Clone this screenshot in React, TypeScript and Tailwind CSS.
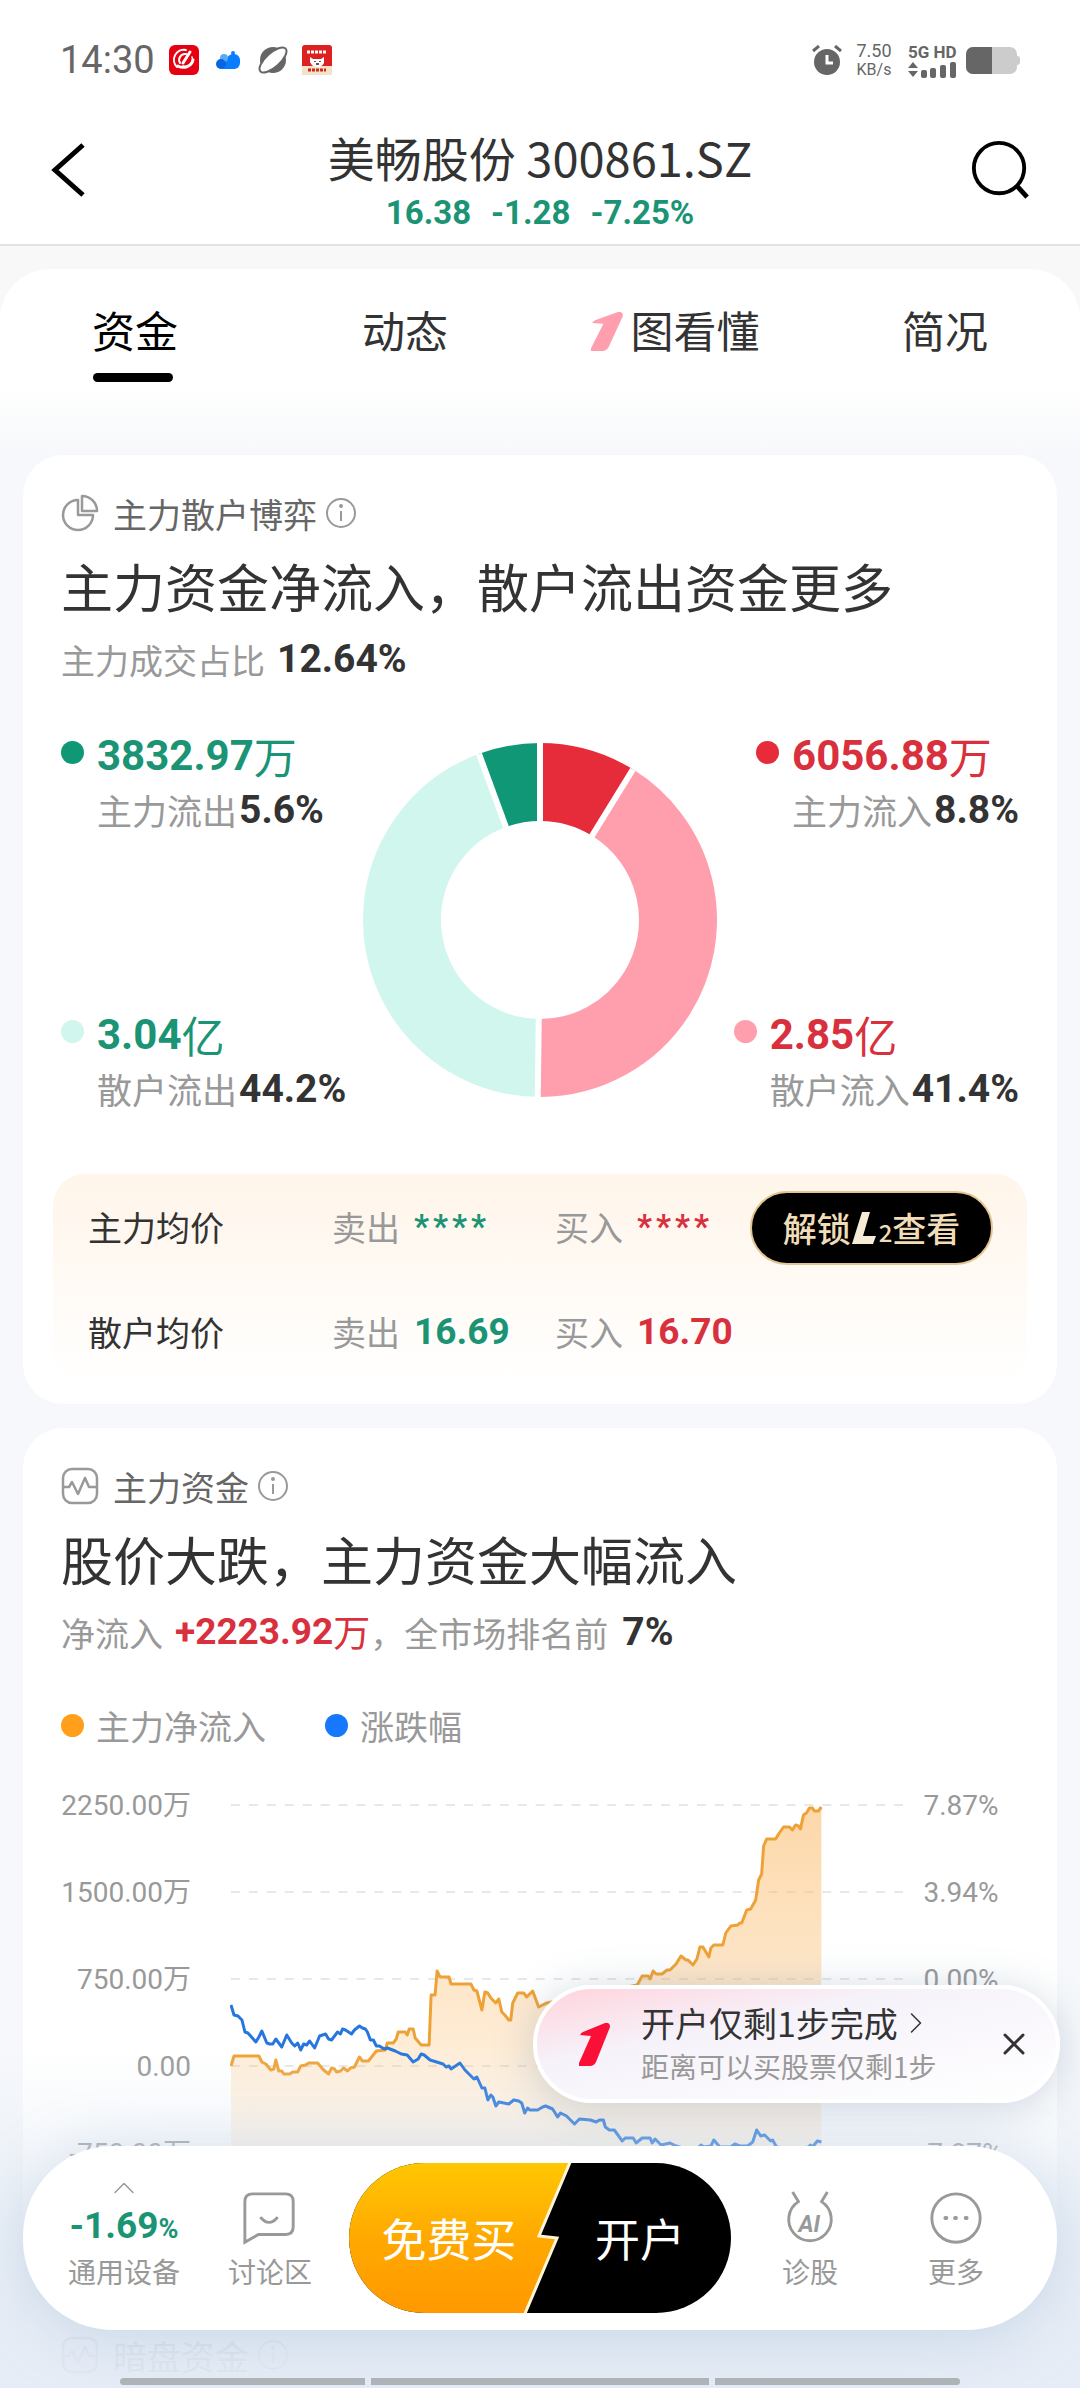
import type { ReactNode } from 'react'
import { ChevronRight, ChevronUp, X } from 'lucide-react'

/**
 * Stock detail page, "资金" tab.
 *
 * The shell is a full-height column: status bar, quote header, tabs, then the
 * cards. The dock and the account-opening tip float over the cards.
 */

const TABS = ['资金', '动态', '图看懂', '简况']

const SLICES = [
  { color: '#e62c3a', share: 8.8 },
  { color: '#ff9fae', share: 41.4 },
  { color: '#d1f6ee', share: 44.2 },
  { color: '#109876', share: 5.6 },
]

const LEFT_AXIS = ['2250.00万', '1500.00万', '750.00万', '0.00', '-750.00万']
// The fourth tick sits under the tip, so it stays blank.
const RIGHT_AXIS = ['7.87%', '3.94%', '0.00%', '', '-7.87%']

const INFLOW =
  '1,271 4,261 29,261 32,267 36,269 41,275 44,274 46,265 49,276 52,276 54,279 60,279 63,277 68,277 71,271 76,270 79,268 88,268 94,275 99,279 102,273 105,274 107,277 111,276 114,273 118,276 121,273 125,272 127,268 130,262 133,266 139,266 147,256 156,255 158,248 164,248 167,244 169,237 176,237 178,240 180,234 184,234 186,243 192,250 200,250 202,200 206,200 208,176 211,182 220,182 222,189 242,189 245,195 248,196 253,215 256,197 259,198 262,203 267,208 270,204 273,217 276,220 280,225 282,225 284,208 287,202 289,198 295,198 298,202 304,196 310,212 318,208 409,190 414,181 420,181 422,184 425,176 428,179 434,179 439,175 442,175 448,169 453,161 458,165 460,165 465,170 469,164 472,152 475,152 481,162 483,153 486,150 495,150 498,138 503,131 510,130 512,128 514,128 519,115 523,114 528,105 531,85 534,79 536,51 539,44 548,44 551,39 556,32 562,32 565,35 568,30 571,31 573,34 576,20 579,18 582,13 585,13 587,16 591,16 594,12'

const CHANGE =
  '1,210 4,220 8,221 12,225 15,237 18,238 26,247 29,242 32,236 37,248 40,249 43,249 46,244 52,252 57,240 62,248 65,251 68,248 71,255 74,249 77,250 80,246 85,253 90,241 96,239 99,244 102,245 108,237 111,239 113,234 116,235 122,239 125,235 130,231 133,233 136,234 138,237 141,245 144,245 147,251 150,251 155,254 158,253 166,256 172,259 178,260 184,267 189,264 192,259 195,260 201,265 214,269 217,272 220,271 222,274 225,272 231,268 236,275 245,284 248,282 253,293 256,293 259,305 262,300 264,302 267,311 270,307 280,309 285,305 290,306 293,308 296,318 299,313 301,315 309,315 314,312 317,311 324,314 326,317 329,322 332,318 338,321 346,329 351,324 362,325 368,327 371,325 375,325 377,332 381,335 386,335 394,346 397,343 405,343 408,348 414,343 422,343 424,348 427,344 433,350 442,348 448,351 455,353 470,353 473,350 476,352 483,351 486,345 492,352 503,352 507,349 512,351 520,351 525,347 529,335 533,341 537,340 543,346 545,345 549,352 566,355 581,352 583,350 585,352 590,346 594,347'

export default function App() {
  return (
    <div className="relative flex h-screen flex-col overflow-hidden bg-[#f6f8fb] font-['Noto_Sans_CJK_SC',sans-serif] text-[#333333]">
      <StatusBar />
      <QuoteHeader />
      <Tabs />
      <main className="flex flex-col gap-6 px-[23px]">
        <DuelCard />
        <MainFundCard />
        <Card icon={<PulseIcon />} name="暗盘资金" />
      </main>
      <div className="absolute inset-x-0 bottom-0 h-[340px] bg-linear-to-b from-[#e3eaf4]/0 via-[#e3eaf4]/60 to-[#e6ecf6]/95 to-90%" />
      <Dock />
      <OpenAccountTip />
      <div className="absolute inset-x-0 bottom-[3px] flex gap-1.5 px-[120px]">
        <span className="h-[7px] w-[245px] rounded-l-full bg-[#aeb3b8]" />
        <span className="h-[7px] flex-1 bg-[#aeb3b8]" />
        <span className="h-[7px] w-[245px] rounded-r-full bg-[#aeb3b8]" />
      </div>
    </div>
  )
}

function StatusBar() {
  return (
    <div className="flex h-[120px] shrink-0 items-center justify-between bg-white px-[60px] font-['Roboto',sans-serif] text-[#666666]">
      <div className="flex items-center">
        <span className="w-[109px] text-[38px]">14:30</span>
        <svg className="mr-4 size-[30px]" viewBox="0 0 30 30">
          <rect width="30" height="30" rx="6" fill="#e60012" />
          <g fill="none" stroke="#fff" strokeLinecap="round">
            <path d="M17 5 A10 10 0 0 0 8 22" strokeWidth="2" />
            <path d="M9 21 A10 9 0 0 0 24 15" strokeWidth="3" />
            <path d="M17 9 A6 6 0 0 0 11 18" strokeWidth="2" />
            <path d="M21 7 L14 18" strokeWidth="3" />
            <path d="M23 12 A7 7 0 0 1 14 21" strokeWidth="1.5" />
          </g>
        </svg>
        <svg className="mr-4 h-[20px] w-[27px]" viewBox="0 0 27 20">
          <circle cx="18" cy="3" r="2" fill="#0a7cff" />
          <rect x="12" y="4" width="13" height="15" rx="6" fill="#0a7cff" />
          <rect x="2" y="9" width="21" height="10" rx="5" fill="#0a7cff" />
          <circle cx="9" cy="8" r="4" fill="#5aaaf8" />
          <circle cx="6" cy="14" r="5" fill="#0a66e0" />
        </svg>
        <svg className="mr-3.5 size-[30px]" viewBox="0 0 30 30">
          <circle cx="15" cy="15" r="13" fill="#666" />
          <ellipse cx="15" cy="15" rx="17" ry="7" fill="#fff" stroke="#666" strokeWidth="2" transform="rotate(-42 15 15)" />
        </svg>
        <svg className="size-[30px]" viewBox="0 0 30 30">
          <rect width="30" height="30" rx="3" fill="#dd2020" />
          <rect y="21" width="30" height="9" fill="#f3e3c8" />
          <path d="M5 7h20" stroke="#fff" strokeWidth="3" strokeDasharray="3 1" />
          <path d="M8 12 l3 2 h8 l3-2 v6 q-2 4-7 4 t-7-5z" fill="#fff" />
          <path d="M13 16v1M18 16v1M14 19h3" stroke="#222" strokeWidth="1.5" />
          <path d="M6 25h18" stroke="#d02a20" strokeWidth="3" strokeDasharray="3 1" />
        </svg>
      </div>
      <div className="flex items-center">
        <svg className="mr-3.5 size-[30px]" viewBox="0 0 30 30">
          <circle cx="15" cy="17" r="13" fill="#666" />
          <path d="M1 6 L7 1 M23 1 L29 6" stroke="#666" strokeWidth="3" />
          <path d="M15 10 V18 H21" fill="none" stroke="#fff" strokeWidth="3" />
        </svg>
        <div className="mr-4 w-[36px] text-center text-[18px] leading-[18px]">
          7.50
          <br />
          <span className="text-[16px]">KB/s</span>
        </div>
        <div className="mr-2.5 flex w-[48px] flex-col">
          <span className="text-[17px] leading-[18px] font-bold whitespace-nowrap">5G HD</span>
          <svg className="h-[17px] w-[48px]" viewBox="0 0 48 17" fill="#666">
            <path d="M0 7 L5 1 L10 7Z M0 10 L5 16 L10 10Z" />
            <rect x="13" y="9" width="6" height="8" rx="2" />
            <rect x="22" y="7" width="6" height="10" rx="2" />
            <rect x="32" y="4" width="6" height="13" rx="2" />
            <rect x="42" y="1" width="6" height="16" rx="2" />
          </svg>
        </div>
        <svg className="h-[27px] w-[54px]" viewBox="0 0 54 27">
          <rect width="51" height="27" rx="7" fill="#ccc" />
          <rect x="48" y="9" width="6" height="9" rx="3" fill="#ccc" />
          <path d="M26 0H7a7 7 0 0 0-7 7v13a7 7 0 0 0 7 7h19z" fill="#666" />
        </svg>
      </div>
    </div>
  )
}

function QuoteHeader() {
  return (
    <header className="flex h-[126px] shrink-0 justify-between border-b-2 border-[#e2e2e2] bg-white px-[50px]">
      <button aria-label="返回" className="flex w-[60px] items-start pt-[22px]">
        <svg className="h-[56px] w-[36px]" viewBox="0 0 36 56" fill="none" stroke="#000" strokeWidth="5">
          <path d="M33 3 L5 28 L33 53" />
        </svg>
      </button>
      <div className="flex flex-col items-center pt-[7px]">
        <h1 className="text-[47px] leading-[60px]">美畅股份 300861.SZ</h1>
        <p className="mt-0.5 flex gap-5 font-['Roboto',sans-serif] text-[33px] leading-[48px] font-bold text-[#1a9474]">
          <span>16.38</span>
          <span>-1.28</span>
          <span>-7.25%</span>
        </p>
      </div>
      <button aria-label="搜索" className="flex w-[60px] items-start justify-end pt-[19px]">
        <svg className="size-[62px]" viewBox="0 0 62 62" fill="none" stroke="#000" strokeWidth="4">
          <circle cx="30" cy="29" r="26" />
          <path d="M48 47 L59 59" strokeWidth="5" />
        </svg>
      </button>
    </header>
  )
}

function Tabs() {
  return (
    <div className="shrink-0 bg-[#f8f8f8] pt-[23px]">
      <nav className="grid h-[186px] grid-cols-4 rounded-t-[50px] bg-linear-to-b from-white from-65% to-[#f6f8fb]">
        {TABS.map((tab, i) => (
          <button key={tab} className="flex flex-col items-center pt-[30px]">
            <span className={i === 0 ? 'flex items-center gap-2 text-[43px] leading-[60px] text-black' : 'flex items-center gap-2 text-[43px] leading-[60px]'}>
              {i === 2 && <OneLogo className="mt-1 h-[39px] w-[32px] text-[#ff9fae]" />}
              {tab}
            </span>
            {i === 0 && <span className="mt-3.5 mr-1 h-[9px] w-[80px] rounded-full bg-black" />}
          </button>
        ))}
      </nav>
    </div>
  )
}

/** Card shell with the small icon, name and info mark on its first row. */
function Card({ icon, name, children }: { icon: ReactNode; name: string; children?: ReactNode }) {
  return (
    <section className="shrink-0 rounded-[40px] bg-white px-[38px] pt-[35px]">
      <div className="flex h-[46px] items-center text-[34px] text-[#666666]">
        {icon}
        <span className="ml-3.5">{name}</span>
        <button aria-label={name + '说明'} className="ml-2">
          <svg className="size-[32px]" viewBox="0 0 32 32" fill="none" stroke="#999" strokeWidth="2">
            <circle cx="16" cy="16" r="14" />
            <path d="M16 14 V24" />
            <circle cx="16" cy="9" r="1" fill="#999" stroke="#999" />
          </svg>
        </button>
      </div>
      {children}
    </section>
  )
}

function DuelCard() {
  return (
    <Card icon={<PieIcon />} name="主力散户博弈">
      <h2 className="mt-5 text-[52px] leading-[60px]">主力资金净流入，散户流出资金更多</h2>
      <p className="mt-5 flex h-[46px] items-center gap-3 text-[34px] text-[#999999]">
        主力成交占比 <Num>12.64%</Num>
      </p>
      <div className="mt-[45px] grid h-[385px] grid-cols-[1fr_354px_1fr] items-center">
        <div className="flex h-full flex-col items-start justify-between">
          <Flow dot="bg-[#109876]" tone="text-[#1a9474]" value="3832.97" unit="万" label="主力流出" share="5.6%" />
          <Flow dot="bg-[#d1f6ee]" tone="text-[#1a9474]" value="3.04" unit="亿" label="散户流出" share="44.2%" />
        </div>
        <Donut />
        <div className="flex h-full flex-col items-end justify-between">
          <Flow dot="bg-[#e62c3a]" tone="text-[#d9303e]" value="6056.88" unit="万" label="主力流入" share="8.8%" />
          <Flow dot="bg-[#ff9fae]" tone="text-[#d9303e]" value="2.85" unit="亿" label="散户流入" share="41.4%" />
        </div>
      </div>
      <div className="-mx-2 mt-[62px] mb-5 rounded-[32px] bg-linear-to-b from-[#fff5ea] to-white">
        <table className="w-full table-fixed text-left text-[34px] text-[#999999]">
          <tbody>
            <tr className="h-[105px]">
              <th scope="row" className="w-[279px] pl-[35px] font-normal text-[#333333]">主力均价</th>
              <td className="w-[223px]">
                <span className="flex items-center gap-3.5">卖出 <Stars className="text-[#1a9474]" /></span>
              </td>
              <td className="w-[195px]">
                <span className="flex items-center gap-3.5">买入 <Stars className="text-[#d9303e]" /></span>
              </td>
              <td>
                <button className="mt-0.5 flex h-[74px] w-[243px] items-center justify-center rounded-full border-2 border-[#e2c591] bg-black text-[34px] font-medium text-[#f0ddb8]">
                  解锁
                  <svg className="h-[32px] w-[28px]" viewBox="0 0 26 32" fill="#f6ecd8">
                    <path d="M10 0 H18 L11 24 H24 L21 32 H0 Z" />
                  </svg>
                  <span className="pt-2 text-[24px]">2</span>
                  查看
                </button>
              </td>
            </tr>
            <tr className="h-[105px]">
              <th scope="row" className="pl-[35px] font-normal text-[#333333]">散户均价</th>
              <td>
                <span className="flex items-center gap-3.5">卖出 <b className="font-['Roboto',sans-serif] text-[37px] text-[#1a9474]">16.69</b></span>
              </td>
              <td>
                <span className="flex items-center gap-3.5">买入 <b className="font-['Roboto',sans-serif] text-[37px] text-[#d9303e]">16.70</b></span>
              </td>
              <td />
            </tr>
          </tbody>
        </table>
      </div>
    </Card>
  )
}

function Num({ children }: { children: ReactNode }) {
  return <b className="font-['Roboto',sans-serif] text-[39px] text-[#333333]">{children}</b>
}

function Stars({ className }: { className: string }) {
  return (
    <b className={`${className} flex gap-1 font-['Roboto',sans-serif] text-[33px] leading-[40px]`}>
      {[0, 1, 2, 3].map((i) => (
        <span key={i}>*</span>
      ))}
    </b>
  )
}

type FlowProps = { dot: string; tone: string; value: string; unit: string; label: string; share: string }

function Flow({ dot, tone, value, unit, label, share }: FlowProps) {
  return (
    <div className="flex gap-[13px]">
      <span className={`${dot} mt-[14px] size-[23px] rounded-full`} />
      <div>
        <p className={`${tone} flex h-[56px] items-center text-[43px]`}>
          <b className="font-['Roboto',sans-serif] text-[42px]">{value}</b>
          {unit}
        </p>
        <p className="mt-1 flex h-[46px] items-center gap-0.5 text-[35px] text-[#999999]">
          {label}
          <Num>{share}</Num>
        </p>
      </div>
    </div>
  )
}

function Donut() {
  let start = 0
  const arcs = SLICES.map((slice) => {
    const arc = { ...slice, start }
    start += slice.share
    return arc
  })
  return (
    <svg className="size-[354px]" viewBox="0 0 354 354" fill="none">
      {arcs.map((arc) => (
        <circle
          key={arc.color}
          cx="177"
          cy="177"
          r="138"
          stroke={arc.color}
          strokeWidth="78"
          pathLength="100"
          strokeDasharray={`${arc.share} ${100 - arc.share}`}
          transform={`rotate(${arc.start * 3.6 - 90} 177 177)`}
        />
      ))}
      {arcs.map((arc) => (
        <path key={arc.color} d="M177 90 V0" stroke="#fff" strokeWidth="6" transform={`rotate(${arc.start * 3.6} 177 177)`} />
      ))}
    </svg>
  )
}

function MainFundCard() {
  return (
    <Card icon={<PulseIcon />} name="主力资金">
      <h2 className="mt-5 text-[52px] leading-[60px]">股价大跌，主力资金大幅流入</h2>
      <p className="mt-5 flex h-[46px] items-center text-[34px] text-[#999999]">
        净流入
        <b className="ml-3 font-['Roboto',sans-serif] text-[37px] text-[#d9303e]">+2223.92</b>
        <span className="text-[37px] text-[#d9303e]">万</span>
        ，全市场排名前
        <span className="ml-3.5"><Num>7%</Num></span>
      </p>
      <div className="mt-[47px] flex h-[46px] items-center text-[34px] text-[#999999]">
        <span className="mr-3 size-[23px] rounded-full bg-[#ff9f1a]" />
        主力净流入
        <span className="mr-3 ml-[59px] size-[23px] rounded-full bg-[#1677ff]" />
        涨跌幅
      </div>
      <div className="mt-3.5 mb-[76px] grid grid-cols-[130px_1fr_84px] pr-4 font-['Roboto','Noto_Sans_CJK_SC',sans-serif] text-[28px] text-[#999999]">
        <div>
          {LEFT_AXIS.map((label) => (
            <p key={label} className="flex h-[87px] items-center justify-end whitespace-nowrap">{label}</p>
          ))}
        </div>
        <svg className="ml-[39px] h-[435px] w-[calc(100%-51px)]" viewBox="0 -33 680 435" preserveAspectRatio="none" fill="none">
          <defs>
            <linearGradient id="inflow" x1="0" y1="0" x2="0" y2="1">
              <stop offset="0" stopColor="#fbb863" stopOpacity="0.55" />
              <stop offset="1" stopColor="#fbb863" stopOpacity="0.08" />
            </linearGradient>
          </defs>
          {[10, 97, 184, 271, 358].map((y) => (
            <path key={y} d={`M1 ${y} H676`} stroke="#e8e8e8" strokeWidth="2" strokeDasharray="9 9" />
          ))}
          <polygon points={`1,402 ${INFLOW} 594,402`} fill="url(#inflow)" />
          <polyline points={INFLOW} stroke="#eea236" strokeWidth="3" strokeLinejoin="round" />
          <polyline points={CHANGE} stroke="#2676dd" strokeWidth="3" strokeLinejoin="round" />
        </svg>
        <div>
          {RIGHT_AXIS.map((label, i) => (
            <p key={i} className="flex h-[87px] items-center justify-center">{label}</p>
          ))}
        </div>
      </div>
    </Card>
  )
}

function OpenAccountTip() {
  return (
    <aside className="absolute right-[20px] bottom-[285px] flex h-[118px] w-[527px] items-center rounded-full border-4 border-white bg-linear-to-br from-[#ffd3dc] via-[#f6f2fa] via-35% to-white pr-[24px] pl-[42px] shadow-[0_4px_40px_rgba(90,120,150,0.28)]">
      <OneLogo className="h-[43px] w-[31px] text-[#fa0f37]" />
      <a href="#open" className="ml-[31px] flex-1">
        <span className="flex items-center text-[34px] leading-[44px]">
          开户仅剩1步完成
          <ChevronRight className="size-9" strokeWidth={1} />
        </span>
        <span className="block text-[28px] leading-[42px] text-[#999999]">距离可以买股票仅剩1步</span>
      </a>
      <button aria-label="关闭">
        <X className="size-9" strokeWidth={2} />
      </button>
    </aside>
  )
}

function Dock() {
  return (
    <nav className="absolute inset-x-[23px] bottom-[58px] flex h-[184px] items-center justify-center rounded-[90px] bg-white text-[28px] text-[#999999] shadow-[0_8px_60px_rgba(150,180,210,0.4)]">
      <button className="flex h-full w-[146px] flex-col items-center pt-[24px]">
        <ChevronUp className="size-9" strokeWidth={1} />
        <span className="flex h-[44px] items-baseline font-['Roboto',sans-serif] text-[37px] leading-[40px] font-bold text-[#1a9474]">
          -1.69<small className="text-[27px]">%</small>
        </span>
        <span className="leading-[42px]">通用设备</span>
      </button>
      <DockItem label="讨论区">
        <path d="M12 4 H46 Q54 4 54 12 V38 Q54 46 46 46 H18 L4 54 V12 Q4 4 12 4 Z" />
        <path d="M20 28 Q29 39 38 28" />
      </DockItem>
      <div className="relative mx-1.5 flex h-[150px] w-[382px] overflow-hidden rounded-full bg-black text-[45px] text-white">
        <svg className="absolute inset-0 size-full" viewBox="0 0 382 150">
          <defs>
            <linearGradient id="buy" x1="0" y1="0" x2="0" y2="1">
              <stop offset="0" stopColor="#ffc803" />
              <stop offset="0.5" stopColor="#ffa900" />
              <stop offset="1" stopColor="#ff9800" />
            </linearGradient>
          </defs>
          <path d="M-3 -3 H222 L190 73 L208 75 L175 153 H-3 Z" fill="url(#buy)" stroke="#fff6d8" strokeWidth="3" />
        </svg>
        <button className="relative flex-1">免费买</button>
        <button className="relative w-[182px]">开户</button>
      </div>
      <DockItem label="诊股">
        <path d="M12 2 L18 12 A22 22 0 1 0 42 12 L48 2" />
        <text x="18" y="43" fill="#999" stroke="none" fontFamily="Roboto, sans-serif" fontSize="24" fontWeight="700" fontStyle="italic">AI</text>
      </DockItem>
      <DockItem label="更多">
        <circle cx="30" cy="29" r="25" />
        <path d="M19 29h1M29 29h1M40 29h1" strokeWidth="4" strokeLinecap="round" />
      </DockItem>
    </nav>
  )
}

function DockItem({ label, children }: { label: string; children: ReactNode }) {
  return (
    <button className="flex h-full w-[146px] flex-col items-center pt-[44px]">
      <svg className="mb-0.5 size-[58px]" viewBox="0 0 60 60" fill="none" stroke="#999" strokeWidth="3">
        {children}
      </svg>
      <span className="leading-[42px]">{label}</span>
    </button>
  )
}

function OneLogo({ className }: { className: string }) {
  return (
    <svg className={className} viewBox="0 0 31 43" preserveAspectRatio="none" fill="currentColor">
      <path d="M1 12 Q2 10 4 9 L26 0 Q31 -1 31 4 L17 39 Q15 43 11 43 H0 V40 L12 13 Z" />
    </svg>
  )
}

function PieIcon() {
  return (
    <svg className="size-[38px]" viewBox="0 0 38 38" fill="none" stroke="#999" strokeWidth="2.5" strokeLinejoin="round">
      <path d="M17 6 A15 15 0 1 0 32 21 H17 Z" />
      <path d="M21 2 A15 15 0 0 1 36 17 H21 Z" />
    </svg>
  )
}

function PulseIcon() {
  return (
    <svg className="size-[38px]" viewBox="0 0 38 38" fill="none" stroke="#999" strokeWidth="2.5" strokeLinejoin="round">
      <rect x="2" y="2" width="34" height="34" rx="9" />
      <path d="M2 20 H8 L11 15 L17 27 L24 11 L28 20 H36" />
    </svg>
  )
}
